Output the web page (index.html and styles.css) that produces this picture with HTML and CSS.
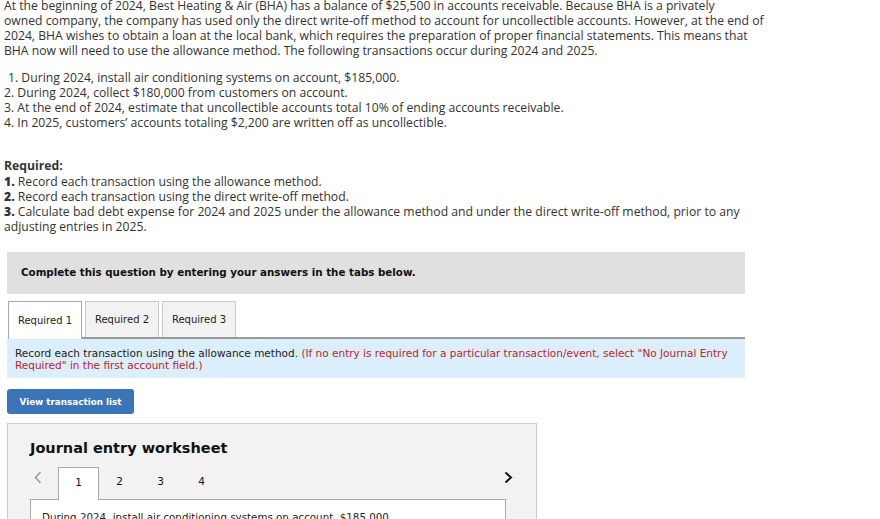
FILE: index.html
```html
<!DOCTYPE html>
<html>
<head>
<meta charset="utf-8">
<link rel="stylesheet" href="styles.css">
</head>
<body>
<div class="intro">
  <p class="para">At the beginning of 2024, Best Heating &amp; Air (BHA) has a balance of $25,500 in accounts receivable. Because BHA is a privately<br>owned company, the company has used only the direct write-off method to account for uncollectible accounts. However, at the end of 2024, BHA wishes to obtain a loan at the local bank, which requires the preparation of proper financial statements. This means that BHA now will need to use the allowance method. The following transactions occur during 2024 and 2025.</p>
  <ol class="list">
    <li><span class="n1">1.</span> During 2024, install air conditioning systems on account, $185,000.</li>
    <li>2. During 2024, collect $180,000 from customers on account.</li>
    <li>3. At the end of 2024, estimate that uncollectible accounts total 10% of ending accounts receivable.</li>
    <li>4. In 2025, customers’ accounts totaling $2,200 are written off as uncollectible.</li>
  </ol>
  <div class="req">
    <div class="req-title">Required:</div>
    <div class="req-first"><b>1.</b> Record each transaction using the allowance method.</div>
    <div><b>2.</b> Record each transaction using the direct write-off method.</div>
    <div><b>3.</b> Calculate bad debt expense for 2024 and 2025 under the allowance method and under the direct write-off method, prior to any<br>adjusting entries in 2025.</div>
  </div>
</div>
<div class="qa">
  <div class="banner">Complete this question by entering your answers in the tabs below.</div>
  <div class="tabs">
    <div class="tab active">Required 1</div>
    <div class="tab">Required 2</div>
    <div class="tab">Required 3</div>
  </div>
  <div class="info">Record each transaction using the allowance method. <span class="red">(If no entry is required for a particular transaction/event, select "No Journal Entry Required" in the first account field.)</span></div>
  <button class="btn">View transaction list</button>
  <div class="ws">
    <div class="ws-title">Journal entry worksheet</div>
    <div class="ws-nav">
      <span class="arrow prev"><svg width="8" height="13" viewBox="0 0 8 13"><path d="M6.5 1 L1.5 6.5 L6.5 12" fill="none" stroke="#9a9a9a" stroke-width="1.5"/></svg></span>
      <div class="ws-tab active">1</div>
      <div class="ws-tab">2</div>
      <div class="ws-tab">3</div>
      <div class="ws-tab">4</div>
      <span class="spacer"></span>
      <span class="arrow next"><svg width="9" height="13" viewBox="0 0 9 13"><path d="M1.5 1.5 L7 6.5 L1.5 11.5" fill="none" stroke="#111" stroke-width="2"/></svg></span>
    </div>
    <div class="ws-body">During 2024, install air conditioning systems on account, $185,000.</div>
  </div>
</div>
</body>
</html>
```
FILE: styles.css
```css
html, body { margin: 0; padding: 0; background: #fff; }
body { overflow: hidden; height: 519px; }
.intro {
  font-family: "Open Sans", "Lato", sans-serif;
  font-size: 12.2px;
  line-height: 15px;
  color: #333;
  width: 764px;
  padding: 0 0 0 4px;
  margin-top: -2px;
}
.para { margin: 0; }
.list { list-style: none; margin: 12px 0 0; padding: 0; }
.list .n1 { margin-left: 4px; }
.req { margin-top: 28px; }
.req-title { font-weight: bold; }
.req-first { margin-top: 1px; }
.req b { font-weight: 800; }
.qa {
  font-family: "DejaVu Sans", sans-serif;
  font-size: 10.3px;
  color: #111;
  padding: 0 135px 0 7px;
  margin-top: 18px;
}
.banner {
  background: #e0e0e0;
  font-weight: bold;
  height: 42px;
  line-height: 34px;
  padding: 0 14px;
  box-sizing: border-box;
  padding-top: 3px;
}
.tabs {
  display: flex;
  gap: 3px;
  margin-top: 7px;
  margin-left: 1px;
  border-bottom: 2px solid #999;
  height: 36px;
}
.tab {
  background: #f2f2f2;
  border: 1px solid #c8c8c8;
  border-bottom: none;
  width: 74px;
  box-sizing: border-box;
  display: flex;
  align-items: center;
  justify-content: center;
  font-size: 10px;
  color: #222;
}
.tab.active { background: #fff; border-color: #aaa; width: 74px; height: 38px; position: relative; z-index: 1; }
.info {
  background: #dbeefb;
  padding: 8px 8px 7px;
  line-height: 12px;
  font-size: 10.5px;
  color: #222;
}
.red { color: #c0212b; }
.btn {
  display: block;
  margin-top: 11px;
  background: #3a75b8;
  color: #fff;
  border: none;
  border-radius: 3px;
  width: 127px;
  height: 25px;
  font-family: "DejaVu Sans", sans-serif;
  font-weight: bold;
  font-size: 8.8px;
  padding: 0;
}
.ws {
  margin-top: 9px;
  width: 530px;
  box-sizing: border-box;
  background: #f2f2f2;
  border: 1px solid #ccc;
  border-bottom: none;
  padding: 14px 30px 0 22px;
  height: 120px;
}
.ws-title { font-weight: bold; font-size: 14.5px; line-height: 20px; }
.ws-nav { display: flex; align-items: flex-start; margin-top: 9px; height: 32px; }
.arrow { display: flex; align-items: center; height: 20px; }
.prev { margin-left: 4px; margin-right: 16px; }
.ws-tab { width: 41px; height: 28px; display: flex; align-items: center; justify-content: center; font-size: 10.5px; }
.ws-tab.active { width: 41px; background: #fff; border: 1px solid #aaa; border-bottom: none; height: 33px; box-sizing: border-box; padding-bottom: 5px; margin-bottom: -1px; position: relative; z-index: 1; }
.spacer { flex: 1; }
.next { margin-right: -7px; }
.ws-body { background: #fff; border: 1px solid #aaa; height: 40px; padding: 11px 11px 0; color: #222; }
```
